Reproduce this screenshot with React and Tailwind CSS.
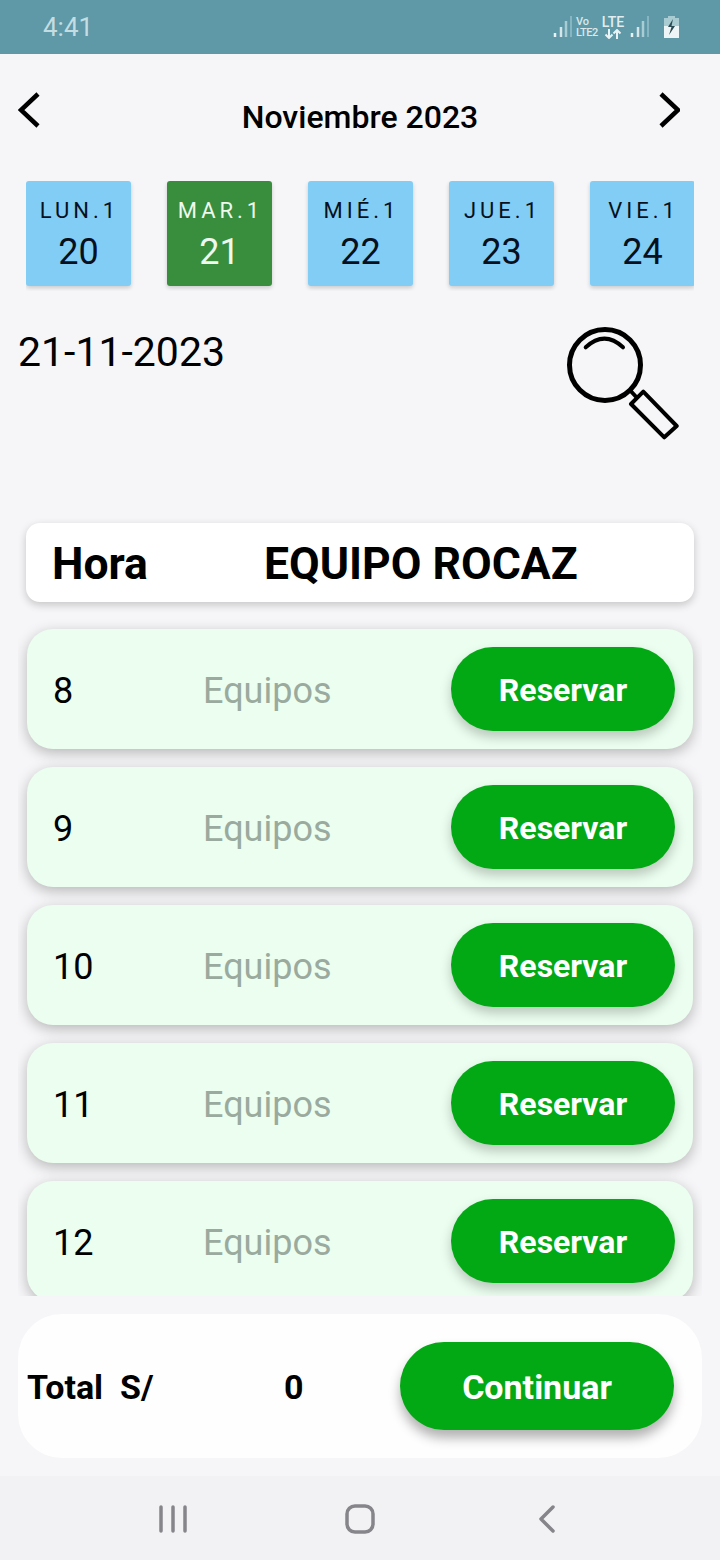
const days = [
  { label: "LUN.1", num: 20 },
  { label: "MAR.1", num: 21, active: true },
  { label: "MIÉ.1", num: 22 },
  { label: "JUE.1", num: 23 },
  { label: "VIE.1", num: 24 },
];

const hours = [8, 9, 10, 11, 12];

const Signal = () => (
  <svg width="20" height="24" viewBox="0 0 20 24" fill="none">
    <path d="M2 18v4" stroke="#e8f3f5" strokeWidth="2.5" />
    <path d="M8 12v10" stroke="#d4e6ea" strokeWidth="2.5" />
    <path d="M13 6v16" stroke="#a9cdd5" strokeWidth="2.5" />
    <path d="M18 1v21" stroke="#86b6c1" strokeWidth="2" />
  </svg>
);

const StatusBar = () => (
  <div className="h-[54px] shrink-0 bg-[#5f98a6] flex items-center pl-[43px] pr-[41px]">
    <span className="text-[26px] leading-[30px] text-[#c3dde2]">4:41</span>
    <div className="ml-auto flex items-center">
      <Signal />
      <div className="ml-[3px] flex flex-col text-[#d8e8eb] text-[11px] leading-[11px] w-[24px] font-medium">
        <span>Vo</span>
        <span className="tracking-[-0.5px]">LTE2</span>
      </div>
      <div className="ml-[2px] flex flex-col items-center text-[#e1eef0] w-[22px]">
        <span className="text-[14px] leading-[14px] font-medium">LTE</span>
        <svg width="20" height="10" viewBox="0 0 20 10" fill="none" stroke="#e8f3f5" strokeWidth="2">
          <path d="M6 0v9M2.5 5.5 6 9l3.5-3.5M14 10V1M10.5 4.5 14 1l3.5 3.5" />
        </svg>
      </div>
      <div className="ml-[6px]">
        <Signal />
      </div>
      <svg className="ml-[14px]" width="15" height="22" viewBox="0 0 15 22">
        <path d="M4 2V0h7v2h4v20H0V2z" fill="#a9cbd2" />
        <path d="M0 10h15v12H0z" fill="#eef5f6" />
        <path d="M9 3 4 11h3.5L5 19l6-9H7.5z" fill="#2b4a52" />
      </svg>
    </div>
  </div>
);

const MonthHeader = () => (
  <div className="h-[127px] shrink-0 pt-[38px] pl-[18px] pr-[40px] flex items-start justify-between">
    <svg width="22" height="36" viewBox="0 0 22 36" fill="none" stroke="#000" strokeWidth="4.5">
      <path d="M20 2 3 18l17 16" />
    </svg>
    <span className="ml-[22px] mt-[7px] text-[32px] leading-[36px] font-medium text-black">Noviembre 2023</span>
    <svg width="22" height="36" viewBox="0 0 22 36" fill="none" stroke="#000" strokeWidth="4.5">
      <path d="m3 2 17 16L3 34" />
    </svg>
  </div>
);

const DayCard = ({ label, num, active }) => (
  <div
    className={`w-[105px] h-[105px] shrink-0 rounded-[3px] shadow-[0_2px_4px_rgba(0,0,0,0.18)] flex flex-col items-center pt-[15px] ${
      active ? "bg-[#388e3c] text-[#eef8ee]" : "bg-[#81cdf5] text-[#07101c]"
    }`}
  >
    <span className="text-[22px] leading-[30px] tracking-[4px] pl-[2px]">{label}</span>
    <span className="mt-[4px] text-[36px] leading-[44px]">{num}</span>
  </div>
);

const DayStrip = () => (
  <div className="ml-[26px] w-[668px] h-[110px] -mb-[5px] shrink-0 overflow-hidden flex gap-[36px]">
    {days.map((d) => (
      <DayCard key={d.label} {...d} />
    ))}
  </div>
);

const DateRow = () => (
  <div className="h-[237px] shrink-0 pl-[18px] pr-[40px] flex justify-between items-start">
    <span className="mt-[42px] text-[41px] leading-[48px] text-black">21-11-2023</span>
    <svg className="mt-[39px]" width="120" height="115" viewBox="0 0 120 115" fill="none" stroke="#000" strokeLinecap="round" strokeLinejoin="round">
      <circle cx="45" cy="40" r="35.5" strokeWidth="5" />
      <path d="M25.7 22.3Q44.5 5 63 22.3" strokeWidth="4" />
      <path d="M83.3 66.7 116.7 101 104.3 112.3 71 79Z" strokeWidth="4" />
      <path d="m70.7 66 6 6.500" strokeWidth="4" />
    </svg>
  </div>
);

const TableHeader = () => (
  <div className="mx-[26px] h-[79px] shrink-0 bg-white rounded-[14px] shadow-[0_3px_8px_rgba(0,0,0,0.2)] flex items-center pl-[26px] pt-[3px] text-[44.5px] leading-[50px] font-bold text-black">
    <span className="w-[212px]">Hora</span>
    <span>EQUIPO ROCAZ</span>
  </div>
);

const HourRow = ({ hour }) => (
  <div className="h-[120px] shrink-0 rounded-[26px] bg-[#ebfeef] shadow-[0_4px_14px_rgba(0,0,0,0.26)] flex items-center pl-[26px] pr-[18px]">
    <span className="w-[150px] pt-[4px] text-[36px] leading-[44px] text-black">{hour}</span>
    <span className="pt-[4px] text-[36px] leading-[44px] text-[#9aaa9e]">Equipos</span>
    <button className="ml-auto w-[224px] h-[84px] rounded-full bg-[#03a914] text-white text-[32px] font-bold shadow-[0_6px_12px_rgba(0,0,0,0.22)]">
      <span className="relative top-[1px]">Reservar</span>
    </button>
  </div>
);

const TotalBar = () => (
  <div className="mt-[18px] mx-[18px] h-[144px] shrink-0 rounded-[44px] bg-[#fefefe] flex items-center pl-[9px] pr-[28px] font-bold text-black">
    <span className="w-[257px] pt-[2px] text-[34px] leading-[40px] whitespace-pre">Total  S/</span>
    <span className="pt-[2px] text-[34px] leading-[40px]">0</span>
    <button className="ml-auto w-[274px] h-[88px] rounded-full bg-[#03a914] text-white text-[34px] font-bold shadow-[0_8px_12px_rgba(0,0,0,0.3)]">
      <span className="relative top-[1px]">Continuar</span>
    </button>
  </div>
);

const NavBar = () => (
  <div className="mt-[18px] flex-1 bg-[#f2f2f4] flex items-center pt-[2px]">
    <div className="w-full flex items-center pl-[159px] pr-[164px] justify-between">
      <svg width="28" height="28" viewBox="0 0 28 28" fill="none" stroke="#85858a" strokeWidth="3.5" strokeLinecap="round">
        <path d="M2 2v24M14 2v24M26 2v24" />
      </svg>
      <svg className="mr-[6px]" width="30" height="30" viewBox="0 0 30 30" fill="none" stroke="#85858a" strokeWidth="3.5">
        <rect x="2" y="2" width="26" height="26" rx="8" />
      </svg>
      <svg width="18" height="28" viewBox="0 0 18 28" fill="none" stroke="#85858a" strokeWidth="3.5" strokeLinecap="round" strokeLinejoin="round">
        <path d="M15 2 3 14l12 12" />
      </svg>
    </div>
  </div>
);

export default function App() {
  return (
    <div className="w-[720px] h-[1560px] overflow-hidden flex flex-col bg-[#f6f6f8] font-['Roboto',sans-serif]">
      <StatusBar />
      <MonthHeader />
      <DayStrip />
      <DateRow />
      <TableHeader />
      <div className="mx-[18px] h-[694px] shrink-0 overflow-hidden px-[9px] pt-[27px] flex flex-col gap-[18px]">
        {hours.map((h) => (
          <HourRow key={h} hour={h} />
        ))}
      </div>
      <TotalBar />
      <NavBar />
    </div>
  );
}
